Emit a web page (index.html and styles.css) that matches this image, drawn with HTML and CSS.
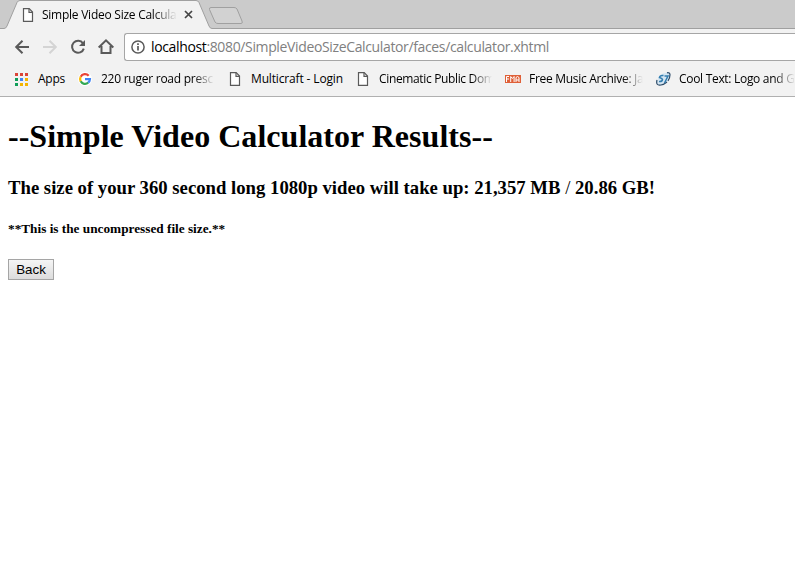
FILE: index.html
```html
<!DOCTYPE html>
<html lang="en">
<head>
<meta charset="utf-8">
<title>Simple Video Size Calculator</title>
<link rel="stylesheet" href="styles.css">
</head>
<body>
<svg width="0" height="0" class="defs"><symbol id="page" viewBox="0 0 12 14"><path d="M1.5.7h5.7l3.3 3.4v9.2h-9z" fill="#fff" stroke="#5a5a5a" stroke-width="1.2"/><path d="M7 .8v3.5h3.5" fill="none" stroke="#5a5a5a" stroke-width="1.2"/></symbol></svg>
<header class="browser">
  <div class="tabs">
    <svg class="tab-shape" width="795" height="29" viewBox="0 0 795 29">
      <path d="M0 28.5H4Q6 28.5 7 26L17 2.5Q18 .5 20 .5H196Q198 .5 199 2.5L209 26Q210 28.5 212 28.5H795V29H0Z" fill="#f2f2f2"/>
      <path d="M0 28.5H4Q6 28.5 7 26L17 2.5Q18 .5 20 .5H196Q198 .5 199 2.5L209 26Q210 28.5 212 28.5H795" fill="none" stroke="#a0a0a0"/>
      <path d="M211 7.5H234Q236 7.5 237 9L242 21Q243 23.500 241 23.500H218Q216 23.500 215 22L209.500 9.500Q209 7.500 211 7.500Z" fill="#d2d2d2" stroke="#a0a0a0"/>
    </svg>
    <div class="tab">
      <svg class="tab-icon" width="12" height="14"><use href="#page"/></svg>
      <span class="tab-title">Simple Video Size Calcula</span>
      <svg class="close" width="9" height="9" viewBox="0 0 9 9"><path d="M1 1l7 7M8 1L1 8" stroke="#444" stroke-width="1.7"/></svg>
    </div>
  </div>
  <div class="toolbar">
    <svg class="nav" width="112" height="28" viewBox="0 0 112 28" fill="none" stroke="#5a5a5a" stroke-width="2">
      <path d="M29 14H16.500M22.500 7.700L16.200 14l6.300 6.300"/>
      <path d="M43 14h12.500M49.500 7.700L55.800 14l-6.300 6.300" stroke="#d4d4d4"/>
      <path d="M83 10.300A6 6 0 1 0 83.800 15.600"/><path d="M85 7v6h-6z" fill="#5a5a5a" stroke="none"/>
      <path d="M98.700 14.500L106 7.300l7.300 7.200M101.500 13v7h9v-7"/>
    </svg>
    <div class="address">
      <svg width="14" height="14" viewBox="0 0 14 14"><circle cx="7" cy="7" r="6.100" fill="none" stroke="#5a5a5a" stroke-width="1.500"/><path d="M7 6v4.600M7 3.200v1.700" stroke="#5a5a5a" stroke-width="1.700"/></svg>
      <span class="url"><span class="host">localhost</span>:8080/SimpleVideoSizeCalculator/faces/calculator.xhtml</span>
    </div>
  </div>
  <nav class="bookmarks">
    <a class="mark apps"><svg width="13" height="13" viewBox="0 0 13 13"><path d="M0 0h3v3H0zM5 0h3v3H5zM10 0h3v3h-3z" fill="#db4437"/><path d="M0 5h3v3H0z" fill="#0f9d58"/><path d="M5 5h3v3H5z" fill="#4285f4"/><path d="M10 5h3v3h-3zM5 10h3v3H5zM10 10h3v3h-3z" fill="#f4b400"/><path d="M0 10h3v3H0z" fill="#0f9d58"/></svg><span>Apps</span></a>
    <a class="mark google"><svg width="14" height="14" viewBox="0 0 14 14"><circle cx="7" cy="7" r="7" fill="#fff"/><g fill="none" stroke-width="2.300"><path d="M2.700 4.700A4.900 4.900 0 0 1 10.700 3.700" stroke="#ea4335"/><path d="M2.700 4.700a4.900 4.900 0 0 0 0 4.700" stroke="#fbbc05"/><path d="M2.700 9.300a4.900 4.900 0 0 0 7.500 1.400" stroke="#34a853"/><path d="M7 7.200h4.900a4.900 4.900 0 0 1-1.700 3.500" stroke="#4285f4"/></g></svg><span class="fade">220 ruger road presc</span></a>
    <a class="mark multicraft"><svg width="12" height="14"><use href="#page"/></svg><span>Multicraft - Login</span></a>
    <a class="mark cinematic"><svg width="12" height="14"><use href="#page"/></svg><span class="fade">Cinematic Public Dom</span></a>
    <a class="mark archive"><svg width="16" height="8" viewBox="0 0 16 8"><path d="M0 0h16v8H0z" fill="#df6038"/><path d="M1.500 7V1.500H4M1.500 4H4M5.700 7V1.500l1.700 2 1.700-2V7M11 7V2.500l1.500-1L14 2.500V7M11 5h3" fill="none" stroke="#fff"/></svg><span class="fade">Free Music Archive: Ja</span></a>
    <a class="mark cool"><svg width="15" height="14" viewBox="0 0 15 14"><path d="M4 3Q8 0 13.500 .5q1 5-2 9Q8 13.500 2 13q-3-3 2-10z" fill="#d5e6f2"/><path d="M1 8q-1.500 6 4 5 3-.5 6-3M11 .8q3-.5 3 2 0 3-2 6" fill="none" stroke="#2c4a68" stroke-width="1.200"/><path d="M7.500 3.500Q4 3 3.500 5.500q3 1 3 2Q6 10 3 9.500M8.500 4h3.500L8.500 11" fill="none" stroke="#337daf" stroke-width="1.500"/></svg><span class="fade">Cool Text: Logo and G</span></a>
  </nav>
</header>
<main>
  <h1>--Simple Video Calculator Results--</h1>
  <h3>The size of your 360 second long 1080p video will take up: 21,357 MB <span class="slash">/</span> 20.86 GB!</h3>
  <h5>**This is the uncompressed file size.**</h5>
  <button type="button">Back</button>
</main>
</body>
</html>
```
FILE: styles.css
```css
* { box-sizing: border-box; }
body { margin: 0; background: #fff; color: #000; font-family: "Liberation Serif", serif; overflow: hidden; }
.defs { position: absolute; }
svg { display: block; flex: none; }
.browser { height: 97px; background: #f2f2f2; border-bottom: 1px solid #b0b0b0; font-family: "Open Sans", "Noto Sans", sans-serif; font-size: 12px; }
.tabs { position: relative; height: 29px; background: #cbcbcb; }
.tab-shape { position: absolute; inset: 0; }
.tab { position: relative; display: flex; align-items: center; width: 200px; height: 29px; padding-left: 22px; }
.tab-title { width: 135px; margin-left: 8px; overflow: hidden; white-space: nowrap; letter-spacing: -0.25px; line-height: 18px; -webkit-mask-image: linear-gradient(to right, #000 82%, transparent); mask-image: linear-gradient(to right, #000 82%, transparent); }
.close { margin-left: 7px; }
.toolbar { display: flex; height: 36px; padding-top: 4px; }
.nav { overflow: visible; }
.address { display: flex; align-items: center; flex: 1; height: 28px; margin-left: 12px; padding-left: 6px; background: #fff; border: 1px solid #a6a6a6; border-right: 0; border-radius: 3px 0 0 3px; }
.url { margin-left: 6px; padding-bottom: 1px; color: #808080; font-size: 14px; letter-spacing: -0.36px; white-space: nowrap; }
.host { color: #000; }
.bookmarks { display: flex; height: 28px; padding-left: 15px; }
.mark { display: flex; align-items: center; flex: none; height: 28px; gap: 10px; white-space: nowrap; letter-spacing: -0.25px; }
.mark span { flex: 1; padding-bottom: 2px; }
.mark .fade { overflow: hidden; -webkit-mask-image: linear-gradient(to right, #000 82%, transparent); mask-image: linear-gradient(to right, #000 82%, transparent); }
.apps { width: 50px; margin-right: 13px; }
.google { width: 136px; gap: 9px; margin-right: 15px; }
.multicraft { width: 115px; margin-right: 13px; letter-spacing: -0.15px; }
.cinematic { width: 135px; margin-right: 13px; letter-spacing: -0.35px; }
.archive { width: 138px; gap: 8px; margin-right: 13px; letter-spacing: -0.3px; }
.cool { width: 139px; gap: 8px; letter-spacing: -0.3px; }
main { display: flow-root; padding: 0 8px; }
h1 { margin: 21px 0 22px; font-size: 32px; line-height: 37px; letter-spacing: 0.03px; }
h3 { margin: 0 0 22px; font-size: 18.72px; line-height: 22px; }
h5 { margin: 0; font-size: 13.28px; line-height: 15px; }
.slash { font-weight: 400; }
button { display: block; width: 46px; height: 21px; margin-top: 23px; padding: 0; border: 1px solid #a5a5a5; border-radius: 0; background: linear-gradient(#f5f5f5, #dcdcdc); color: #000; font: 400 13.33px/18px "Liberation Sans", sans-serif; }
```
